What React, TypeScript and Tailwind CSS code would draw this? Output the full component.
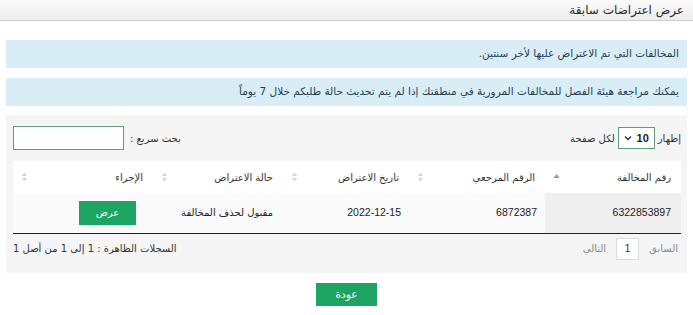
import { type ReactNode } from 'react'

// Past objections list — RTL DataTables-style page
type Col = { label: string; w: string; sort: 'asc' | 'both' }

const COLS: Col[] = [
  { label: 'رقم المخالفة', w: 'w-[136px]', sort: 'asc' },
  { label: 'الرقم المرجعي', w: 'w-[136px]', sort: 'both' },
  { label: 'تاريخ الاعتراض', w: 'w-[126px]', sort: 'both' },
  { label: 'حالة الاعتراض', w: 'w-[130px]', sort: 'both' },
  { label: 'الإجراء', w: 'w-[140px]', sort: 'both' },
]

function SortIcon({ dir }: { dir: 'asc' | 'both' }) {
  if (dir === 'asc') {
    return (
      <svg width="7" height="10" viewBox="0 0 7 10" className="shrink-0">
        <path d="M0.5 6 L3.5 2 L6.5 6 Z" fill="#8f8fd4" />
      </svg>
    )
  }
  return (
    <svg width="7" height="12" viewBox="0 0 7 12" className="shrink-0">
      <path d="M0.8 5 L3.5 1.5 L6.2 5 Z" fill="#d6d6d6" />
      <path d="M0.8 7 L3.5 10.5 L6.2 7 Z" fill="#d6d6d6" />
    </svg>
  )
}

function Alert({ children }: { children: ReactNode }) {
  return (
    <div className="flex h-[28px] items-center bg-[#d9edf7] px-[8px] text-[10.5px] text-[#263f52]">
      {children}
    </div>
  )
}

export default function App() {
  return (
    <div
      dir="rtl"
      className="h-[315px] w-[693px] overflow-hidden bg-white font-['DejaVu_Sans','Noto_Sans',sans-serif] text-[#333]"
    >
      {/* Page title bar */}
      <div className="flex h-[21px] items-center border-b border-[#cdcdcd] bg-gradient-to-b from-[#fbfbfb] to-[#ececec] px-[9px] text-[12px] text-[#2b2b2b]">
        عرض اعتراضات سابقة
      </div>

      <div className="px-[6px] pt-[19px]">
        <Alert>المخالفات التي تم الاعتراض عليها لأخر سنتين.</Alert>
        <div className="mt-[10px]">
          <Alert>يمكنك مراجعة هيئة الفصل للمخالفات المرورية في منطقتك إذا لم يتم تحديث حالة طلبكم خلال 7 يوماً</Alert>
        </div>

        {/* Table panel */}
        <div className="mt-[9px] h-[158px] bg-[#f5f5f5] pl-[7px] pr-[6px] pt-[11px]">
          <div className="flex h-[24px] items-center justify-between text-[10px] text-[#333]">
            <div className="flex items-center gap-[3px]">
              <span>إظهار</span>
              <div className="flex h-[22px] w-[37px] items-center justify-between border border-[#5e9c7c] bg-white px-[5px]">
                <span className="font-['Liberation_Sans',sans-serif] text-[11px] font-bold text-[#222]">10</span>
                <svg width="8" height="6" viewBox="0 0 8 6">
                  <path d="M1 1.5 L4 4.5 L7 1.5" stroke="#333" strokeWidth="1.4" fill="none" />
                </svg>
              </div>
              <span>لكل صفحة</span>
            </div>
            <div className="flex items-center gap-[6px]">
              <span>بحث سريع :</span>
              <div className="h-[24px] w-[111px] border border-[#5e9c7c] bg-white" />
            </div>
          </div>

          <table className="mt-[11px] w-full table-fixed border-collapse text-[10px]">
            <colgroup>
              {COLS.map((c) => (
                <col key={c.label} className={c.w} />
              ))}
            </colgroup>
            <thead>
              <tr className="h-[32px] bg-white">
                {COLS.map((c) => (
                  <th key={c.label} className="px-[8px] text-right font-normal text-[#333]">
                    <div className="flex items-center justify-between">
                      <span className="pr-[2px]">{c.label}</span>
                      <SortIcon dir={c.sort} />
                    </div>
                  </th>
                ))}
              </tr>
            </thead>
            <tbody>
              <tr className="h-[40px] border-b border-[#222] bg-[#fafafa] text-[#222]">
                <td className="bg-[#efefef] px-[10px] text-right font-['Liberation_Sans',sans-serif] text-[10.5px]">6322853897</td>
                <td className="px-[8px] text-right font-['Liberation_Sans',sans-serif] text-[10.5px]">6872387</td>
                <td className="px-[8px] text-right font-['Liberation_Sans',sans-serif] text-[10.5px]">2022-12-15</td>
                <td className="px-[10px] text-right">مقبول لحذف المخالفة</td>
                <td className="px-[17px] text-right">
                  <button className="flex h-[24px] w-[57px] items-center justify-center bg-[#1da462] text-[10px] text-white">
                    عرض
                  </button>
                </td>
              </tr>
            </tbody>
          </table>

          <div className="mt-[4px] flex h-[22px] items-center justify-between text-[10px]">
            <div className="flex items-center gap-[10px] pr-[3px] text-[#8a8a8a]">
              <span>السابق</span>
              <span className="flex h-[22px] w-[23px] items-center justify-center border border-[#dcdcdc] bg-white font-['Liberation_Sans',sans-serif] text-[#333]">
                1
              </span>
              <span>التالي</span>
            </div>
            <span className="text-[#333]">السجلات الظاهرة : 1 إلى 1 من أصل 1</span>
          </div>
        </div>

        <div className="mt-[10px] flex justify-center">
          <button className="flex h-[23px] w-[61px] items-center justify-center bg-[#1da462] text-[10.5px] text-white">
            عودة
          </button>
        </div>
      </div>
    </div>
  )
}
